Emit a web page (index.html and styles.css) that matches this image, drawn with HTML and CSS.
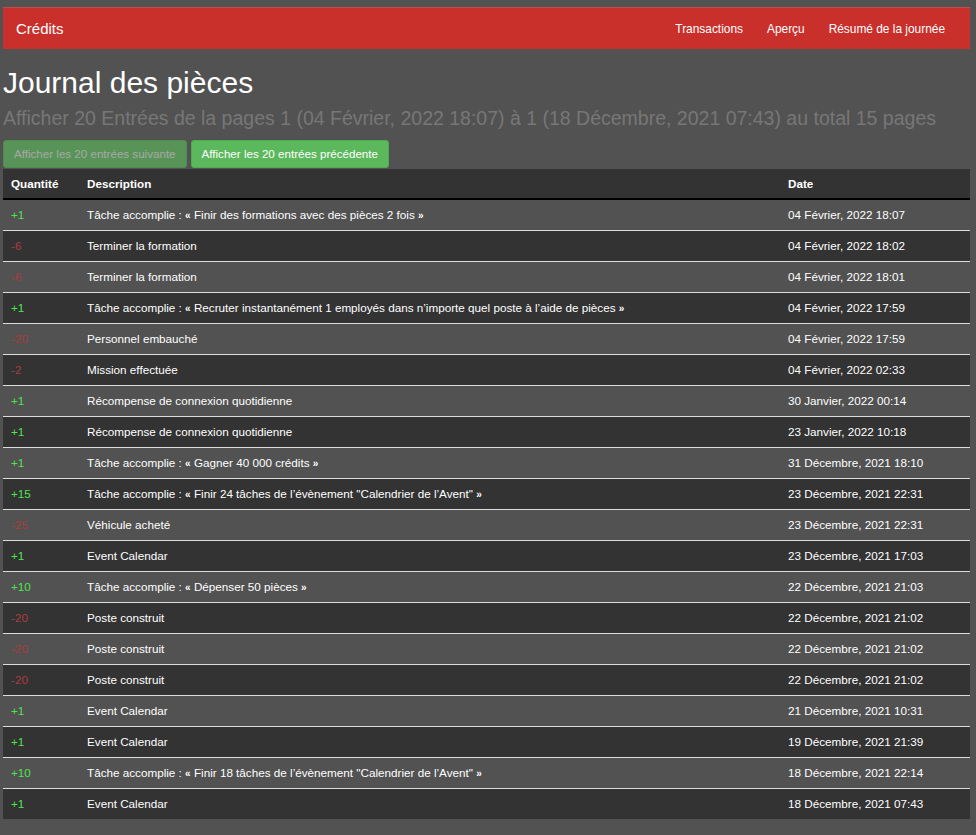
FILE: index.html
```html
<!DOCTYPE html>
<html lang="fr">
<head>
<meta charset="utf-8">
<title>Journal des pièces</title>
<link rel="stylesheet" href="styles.css">
</head>
<body>
<div class="page">
  <nav class="navbar">
    <a class="brand" href="#">Crédits</a>
    <ul class="nav-links">
      <li><a href="#">Transactions</a></li>
      <li><a href="#">Aperçu</a></li>
      <li><a href="#">Résumé de la journée</a></li>
    </ul>
  </nav>

  <h1 class="title">Journal des pièces</h1>
  <p class="subtitle">Afficher 20 Entrées de la pages 1 (04 Février, 2022 18:07) à 1 (18 Décembre, 2021 07:43) au total 15 pages</p>

  <div class="actions">
    <a class="btn btn-disabled" href="#">Afficher les 20 entrées suivante</a>
    <a class="btn" href="#">Afficher les 20 entrées précédente</a>
  </div>

  <table class="log">
    <colgroup>
      <col class="c-qty">
      <col class="c-desc">
      <col class="c-date">
    </colgroup>
    <thead>
      <tr><th>Quantité</th><th>Description</th><th>Date</th></tr>
    </thead>
    <tbody>
      <tr><td class="pos">+1</td><td>Tâche accomplie : <b>«</b> Finir des formations avec des pièces 2 fois <b>»</b></td><td>04 Février, 2022 18:07</td></tr>
      <tr><td class="neg">-6</td><td>Terminer la formation</td><td>04 Février, 2022 18:02</td></tr>
      <tr><td class="neg">-6</td><td>Terminer la formation</td><td>04 Février, 2022 18:01</td></tr>
      <tr><td class="pos">+1</td><td>Tâche accomplie : <b>«</b> Recruter instantanément 1 employés dans n’importe quel poste à l’aide de pièces <b>»</b></td><td>04 Février, 2022 17:59</td></tr>
      <tr><td class="neg">-20</td><td>Personnel embauché</td><td>04 Février, 2022 17:59</td></tr>
      <tr><td class="neg">-2</td><td>Mission effectuée</td><td>04 Février, 2022 02:33</td></tr>
      <tr><td class="pos">+1</td><td>Récompense de connexion quotidienne</td><td>30 Janvier, 2022 00:14</td></tr>
      <tr><td class="pos">+1</td><td>Récompense de connexion quotidienne</td><td>23 Janvier, 2022 10:18</td></tr>
      <tr><td class="pos">+1</td><td>Tâche accomplie : <b>«</b> Gagner 40 000 crédits <b>»</b></td><td>31 Décembre, 2021 18:10</td></tr>
      <tr><td class="pos">+15</td><td>Tâche accomplie : <b>«</b> Finir 24 tâches de l’évènement "Calendrier de l’Avent" <b>»</b></td><td>23 Décembre, 2021 22:31</td></tr>
      <tr><td class="neg">-25</td><td>Véhicule acheté</td><td>23 Décembre, 2021 22:31</td></tr>
      <tr><td class="pos">+1</td><td>Event Calendar</td><td>23 Décembre, 2021 17:03</td></tr>
      <tr><td class="pos">+10</td><td>Tâche accomplie : <b>«</b> Dépenser 50 pièces <b>»</b></td><td>22 Décembre, 2021 21:03</td></tr>
      <tr><td class="neg">-20</td><td>Poste construit</td><td>22 Décembre, 2021 21:02</td></tr>
      <tr><td class="neg">-20</td><td>Poste construit</td><td>22 Décembre, 2021 21:02</td></tr>
      <tr><td class="neg">-20</td><td>Poste construit</td><td>22 Décembre, 2021 21:02</td></tr>
      <tr><td class="pos">+1</td><td>Event Calendar</td><td>21 Décembre, 2021 10:31</td></tr>
      <tr><td class="pos">+1</td><td>Event Calendar</td><td>19 Décembre, 2021 21:39</td></tr>
      <tr><td class="pos">+10</td><td>Tâche accomplie : <b>«</b> Finir 18 tâches de l’évènement "Calendrier de l’Avent" <b>»</b></td><td>18 Décembre, 2021 22:14</td></tr>
      <tr><td class="pos">+1</td><td>Event Calendar</td><td>18 Décembre, 2021 07:43</td></tr>
    </tbody>
  </table>
</div>
</body>
</html>
```

FILE: styles.css
```css
html, body {
  margin: 0;
  padding: 0;
  background: #525252;
}

body {
  font-family: "Liberation Sans", Arial, sans-serif;
  font-size: 12px;
  color: #fff;
}

.page {
  padding: 7px 6px 20px 3px;
}

.navbar {
  display: flex;
  align-items: center;
  justify-content: space-between;
  height: 41px;
  background: #c9302c;
  border-top: 1px solid #b8524f;
  padding: 0 13px 0 13px;
}

.brand {
  color: #fff;
  text-decoration: none;
  font-size: 15px;
  padding: 0;
}

.nav-links {
  display: flex;
  list-style: none;
  margin: 0;
  padding: 0;
}

.nav-links a {
  display: block;
  color: #fff;
  text-decoration: none;
  font-size: 11.9px;
  padding: 0 12px;
}

.title {
  margin: 17px 0 0 0;
  font-size: 30px;
  line-height: 33px;
  font-weight: normal;
  color: #fff;
}

.subtitle {
  margin: 8px 0 0 0;
  font-size: 19.5px;
  line-height: 22px;
  color: #777;
}

.actions {
  display: flex;
  gap: 4px;
  margin-top: 11px;
}

.btn {
  display: block;
  font-size: 11.6px;
  line-height: 18px;
  padding: 4px 10px;
  color: #fff;
  text-decoration: none;
  background: #5cb85c;
  border: 1px solid #4cae4c;
  border-radius: 3px;
}

.btn-disabled {
  opacity: 0.65;
  color: #d6d6d6;
}

.log {
  width: 967px;
  border-collapse: collapse;
  table-layout: fixed;
  margin-top: 1px;
  font-size: 11.7px;
}

.c-qty { width: 76px; }
.c-desc { width: 701px; }
.c-date { width: 190px; }

.log th {
  height: 13px;
  text-align: left;
  font-weight: bold;
  background: #333;
  padding: 8px;
  line-height: 13px;
  vertical-align: middle;
  border-bottom: 2px solid #000;
}

.log td {
  height: 14px;
  padding: 8px;
  line-height: 14px;
  vertical-align: middle;
  border-top: 1px solid #ddd;
  white-space: nowrap;
}

.log td b {
  font-weight: bold;
  font-size: 10px;
  line-height: 10px;
}

.log tbody tr:first-child td {
  border-top: 0;
}

.log tbody tr:nth-child(even) td {
  background: #333;
}

.log td.pos { color: #4ee44e; }
.log td.neg { color: #a83d3d; }
```
